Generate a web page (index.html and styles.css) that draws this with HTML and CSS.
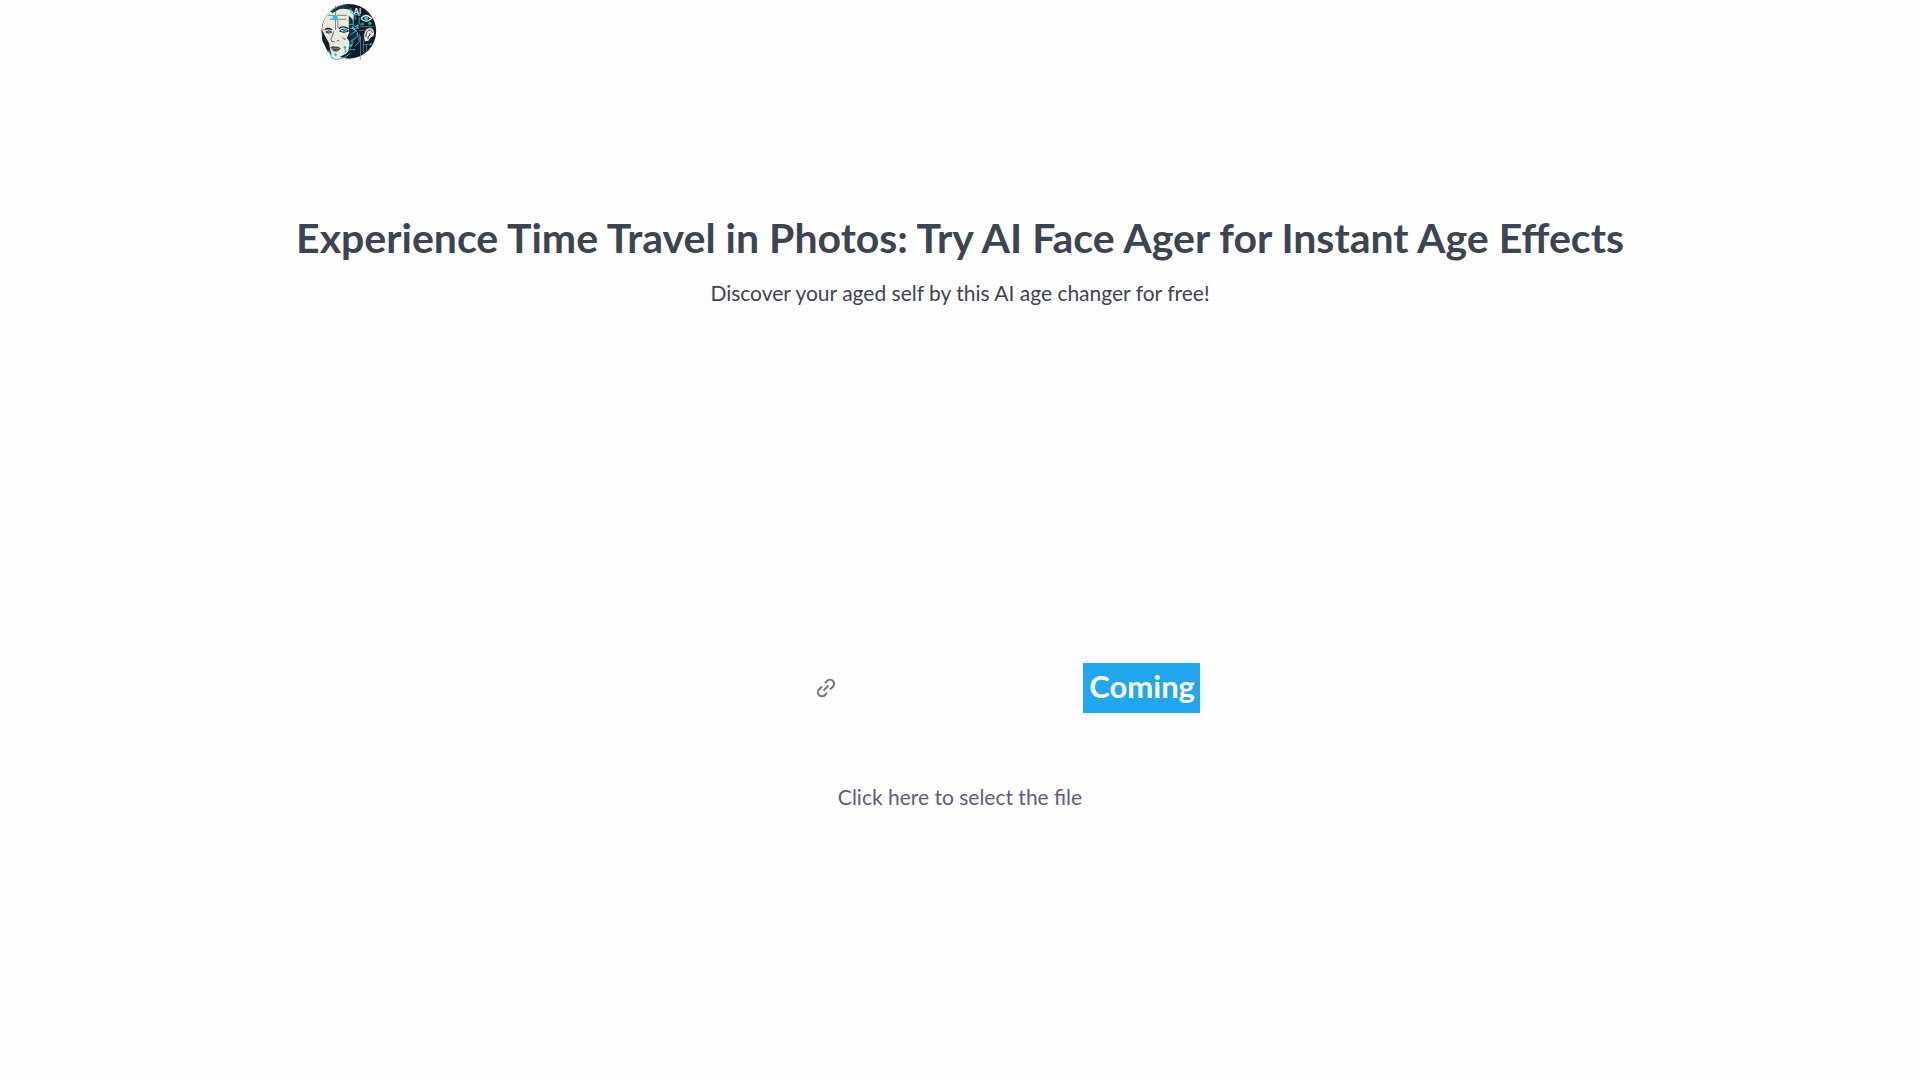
FILE: index.html
```html
<!DOCTYPE html>
<html lang="en">
<head>
<meta charset="utf-8">
<meta name="viewport" content="width=device-width, initial-scale=1">
<title>AI Face Ager</title>
<link rel="stylesheet" href="styles.css">
</head>
<body>
<header class="header">
  <a class="logo" href="#" aria-label="AI Face Ager home">
    <svg class="logo-art" viewBox="33 9 171 174" aria-hidden="true">
      <circle cx="118" cy="94" r="82" fill="#101d2c"/>
      <path d="M38 97C36 55 63 20 106 15q20 7 27 27l-2 38 12 16-7 21-11 25-12 17-29 16-18-3-8-15-7-26-12-18z" fill="#eee9df"/>
      <path d="M63 35q22-19 45-21 17 5 25 20-19-11-42-7l-22 12z" fill="#163743"/>
      <path d="M118 47q11 7 15 21l-5 17 15 12-7 22-11 23-8 12 3-29-8-11 7-15-1-21z" fill="#12313d"/>
      <path d="M38 90l12 25 9 15 3 20 5 15-14-13-15-32z" fill="#101d2c"/>
      <path d="M56 46h18m8 0h31M60 58h50M78 18v72M85 61v24M40 89h30" fill="none" stroke="#46515b" stroke-width="2"/>
      <circle cx="77" cy="53" r="8" fill="#20c4d5"/>
      <path d="M47 88q9-6 19 1m22-4q14-9 29 1" fill="none" stroke="#14202c" stroke-width="4"/>
      <path d="M90 93q13-11 27 0-14 9-27 0M49 96q9-7 17 0-9 7-17 0" fill="#fff" stroke="#17222e" stroke-width="3"/>
      <circle cx="105" cy="92" r="6" fill="#1a9dae"/><circle cx="59" cy="96" r="4" fill="#1a9dae"/>
      <path d="M72 94q-1 13-8 23 0 10 12 9m6-3q5-5 7 1M98 112l8 8" fill="none" stroke="#1a2633" stroke-width="2"/>
      <path d="M62 143q9-7 14-3 9-3 18 5-13 18-26 4z" fill="#35434c"/>
      <path d="M68 152q8 5 17 0M64 145h25" fill="none" stroke="#a9aaa5" stroke-width="2"/>
      <path d="M57 151l10 23q18 10 44-5l12-10" fill="none" stroke="#20bfc9" stroke-width="3"/>
      <path d="M124 24v13l13 8v15m-6-16h20m-20 12v20l18 9M149 52v22m-30-1h14m-12 12h26M123 104l18-13m-18 33 21-14v-13m-27 47 11-11v-14m9 19 12-12v-24m-42 42v15m13-10h17" fill="none" stroke="#2aafb9" stroke-width="3"/>
      <path d="M154 70v10h38M148 91h18M153 108v72m9-62v39M171 132v21l-14 14M159 134h34" fill="none" stroke="#8795a0" stroke-width="2"/>
      <path d="M164 121c-10-41 29-50 31-22 1 16-14 9-16 24l-12 3z" fill="#f0e9dc" stroke="#111b29" stroke-width="3"/>
      <path d="M170 111c-4-20 16-28 18-13M176 117c-4-9 8-9 5-17" fill="none" stroke="#263543" stroke-width="3"/>
      <path d="M154 55q15-17 32 0-16 17-32 0" fill="#102434" stroke="#e7eeed" stroke-width="4"/>
      <circle cx="170" cy="55" r="6" fill="#4abac6"/>
      <text class="logo-text" x="133" y="41">AI</text>
      <g fill="#26ba79"><circle cx="181" cy="70" r="5"/><circle cx="159" cy="72" r="4"/><circle cx="184" cy="132" r="3"/></g>
      <g fill="#20c4ce"><circle cx="149" cy="45" r="4"/><circle cx="144" cy="78" r="4"/><circle cx="106" cy="142" r="4"/><circle cx="106" cy="117" r="3"/><circle cx="78" cy="164" r="4"/><circle cx="124" cy="136" r="4"/></g>
    </svg>
  </a>
</header>
<main class="main">
  <h1 class="title">Experience Time Travel in Photos: Try AI Face Ager for Instant Age Effects</h1>
  <p class="subtitle">Discover your aged self by this AI age changer for free!</p>
  <section class="upload" aria-label="Upload a photo">
    <div class="link-row">
      <svg class="link-icon" viewBox="0 0 20 20" aria-hidden="true">
        <path d="M9 5l2-2a3.8 3.8 0 0 1 6 5.500l-3 3M11 15l-2 2a3.800 3.800 0 0 1-6-5.500l3-3M7.500 12.500l5-5"/>
      </svg>
      <strong class="badge">Coming</strong>
    </div>
    <button class="select-file" type="button">Click here to select the file</button>
  </section>
</main>
</body>
</html>
```
FILE: styles.css
```css
* {
  box-sizing: border-box;
}

body {
  margin: 0;
  background: #fefefe;
  color: #3d4451;
  font-family: Lato, "Liberation Sans", sans-serif;
}

.header {
  display: flex;
  max-width: 1280px;
  height: 64px;
  margin: 0 auto;
  align-items: center;
}

.logo {
  display: flex;
}

.logo-art {
  width: 58px;
  height: 58px;
}

.logo-text {
  fill: #fff;
  font-size: 22px;
  font-weight: 700;
}

.main {
  display: flex;
  flex-direction: column;
  align-items: center;
  padding: 144px 16px 64px;
}

.title {
  margin: 0;
  font-size: 41px;
  font-weight: 700;
  line-height: 60px;
  text-align: center;
}

.subtitle {
  margin: 11px 0 0;
  font-size: 21px;
  line-height: 28px;
  text-align: center;
}

.upload {
  display: flex;
  width: 100%;
  max-width: 480px;
  margin-top: 356px;
  flex-direction: column;
  align-items: center;
  gap: 70px;
}

.link-row {
  display: flex;
  width: 100%;
  padding-left: 96px;
  align-items: center;
  justify-content: space-between;
}

.link-icon {
  width: 20px;
  height: 20px;
  fill: none;
  stroke: #777;
  stroke-width: 2;
}

.badge {
  padding: 0 5px 4px 6px;
  background: #23a6f0;
  color: #fff;
  font-size: 31px;
  line-height: 46px;
}

.select-file {
  padding: 0;
  border: 0;
  background: none;
  color: #635b7b;
  font: inherit;
  font-size: 21px;
  line-height: 28px;
  cursor: pointer;
}
```
